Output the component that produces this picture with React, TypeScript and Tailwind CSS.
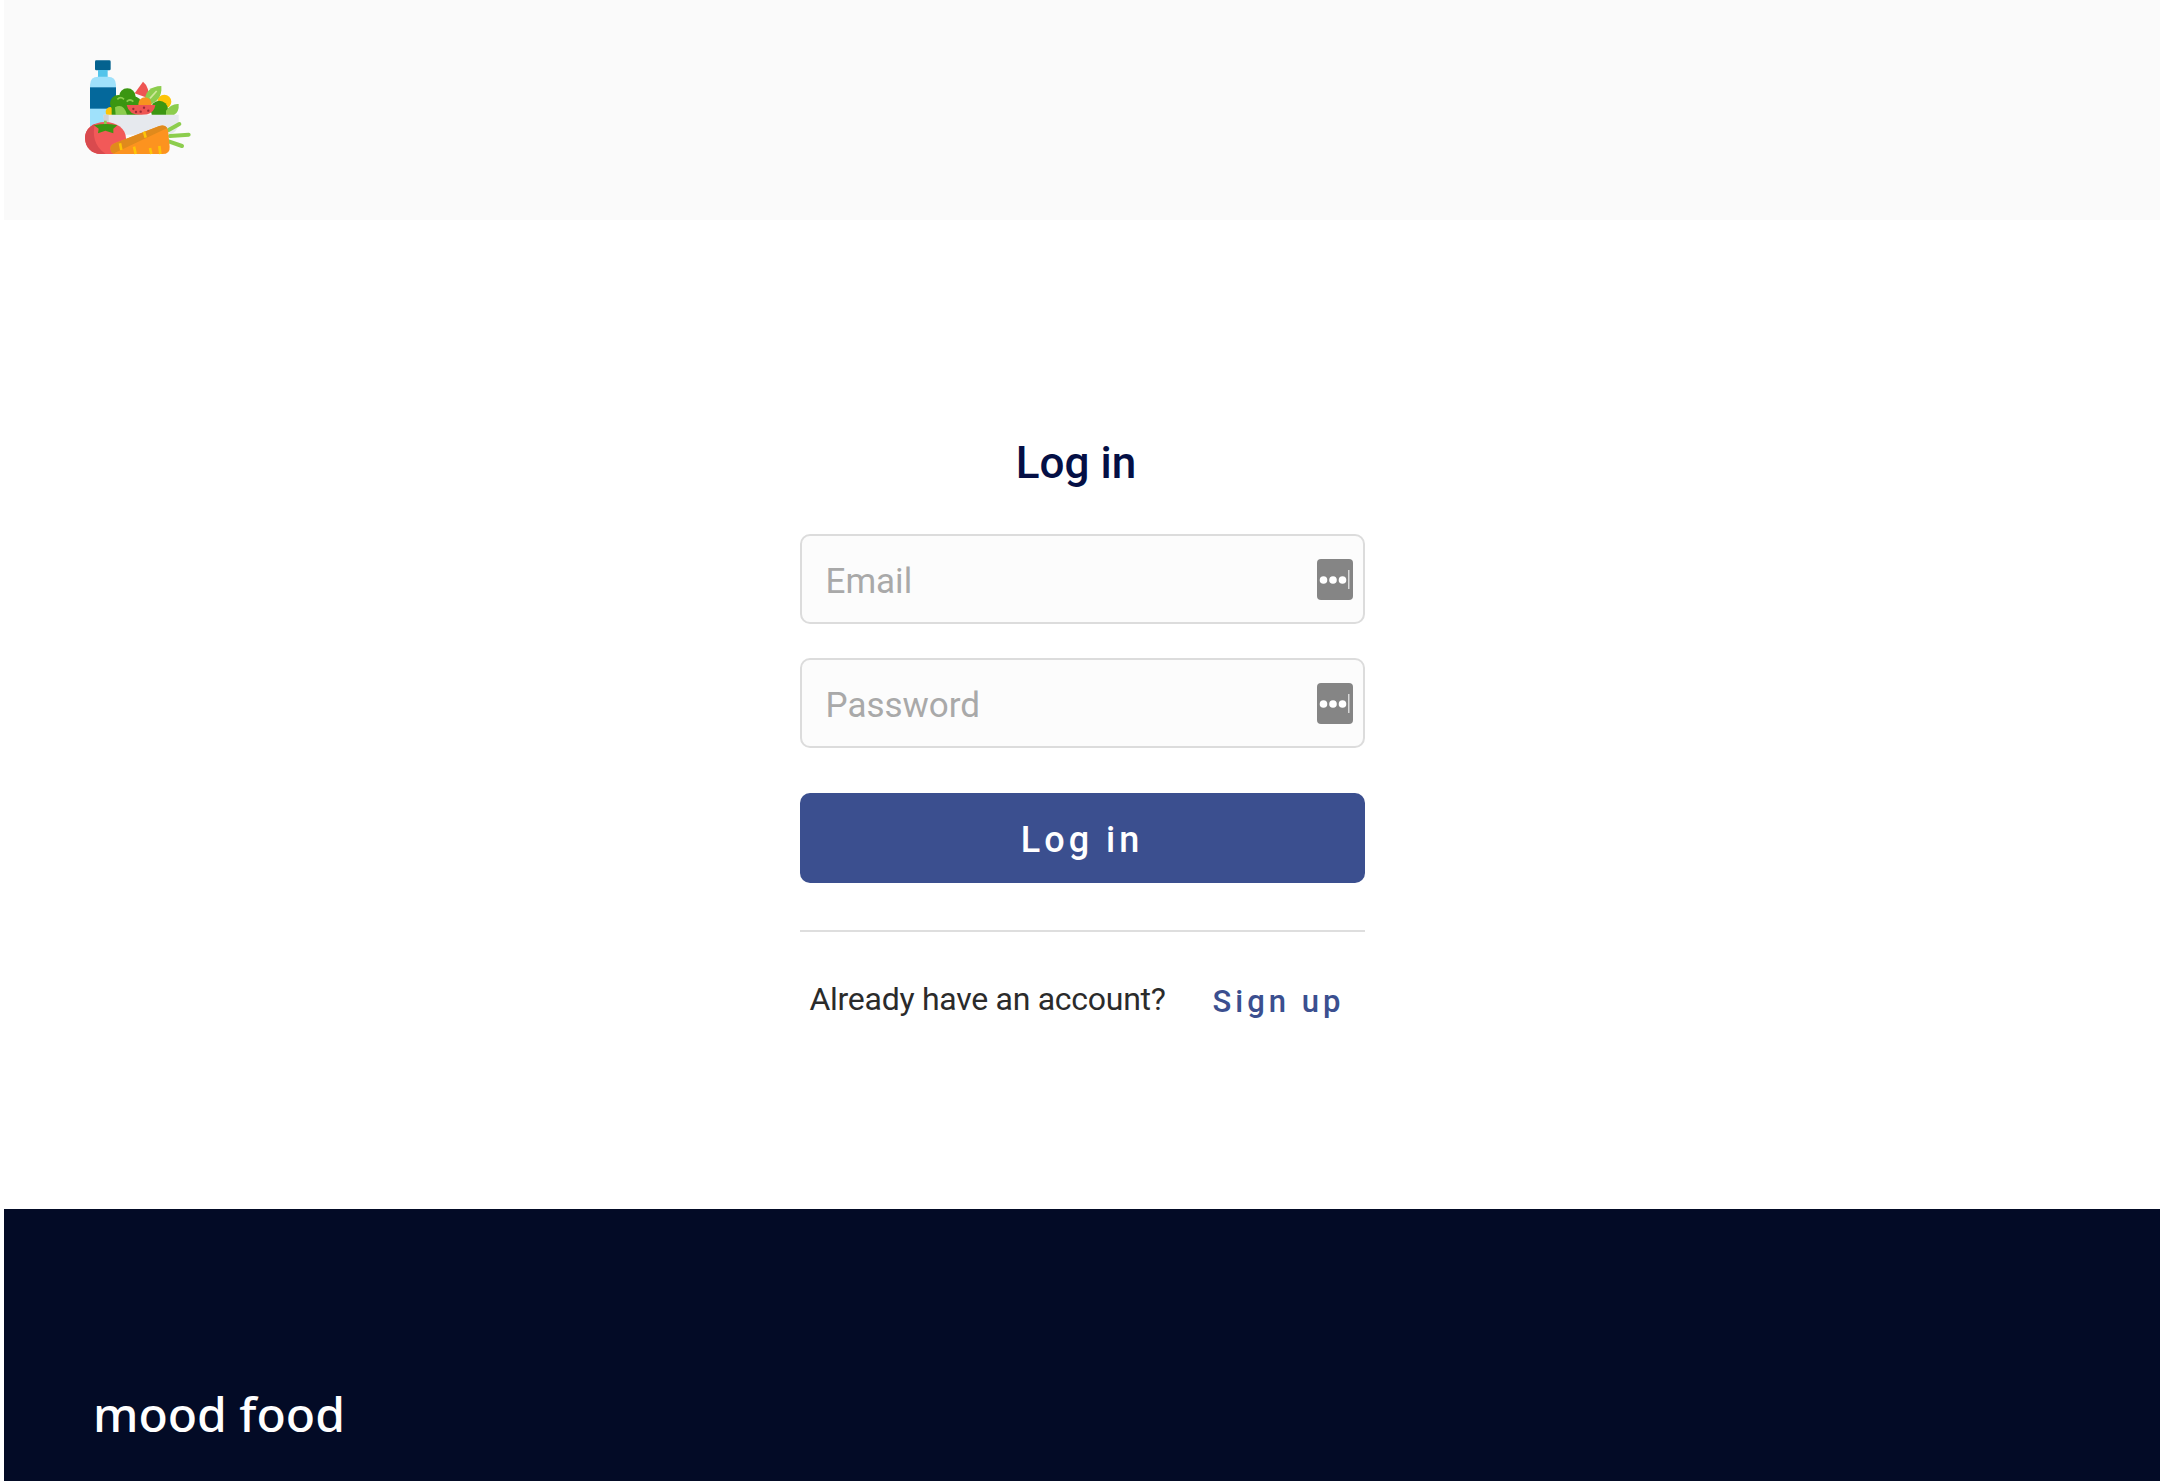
function Logo() {
  return (
    <svg viewBox="0 0 390 330" className="block h-[110px] w-[130px] blur-[0.7px]">
      {/* bottle */}
      <rect x="75" y="31" width="47" height="30" rx="4" fill="#04628f" />
      <rect x="84" y="60" width="29" height="22" fill="#53c4ea" />
      <path d="M60 105q0-25 25-25h28q25 0 25 25v130H60z" fill="#9fe1fb" />
      <rect x="60" y="112" width="78" height="64" fill="#04689b" />
      {/* salad */}
      <circle cx="122" cy="186" r="15" fill="#fdc407" />
      <path d="M194 130l25-35q20 16 16 50z" fill="#ee5553" />
      <circle cx="283" cy="155" r="21" fill="#fdc407" />
      <path d="M224 152q2-42 50-44 4 46-42 58z" fill="#8ccd4d" />
      <path d="M240 145l20-22" stroke="#cfe89a" strokeWidth="5" fill="none" />
      <g fill="#3b9611">
        <circle cx="145" cy="160" r="25" />
        <circle cx="172" cy="140" r="25" />
        <circle cx="190" cy="165" r="26" />
        <rect x="125" y="165" width="90" height="30" />
        <circle cx="268" cy="178" r="26" />
        <rect x="245" y="178" width="58" height="17" />
      </g>
      <path d="M142 148q10-10 20 0M170 155q10-10 20 0" stroke="#8ccd4d" strokeWidth="5" fill="none" />
      <path d="M135 172q26-14 36 22h-34z" fill="#8ccd4d" />
      <path d="M288 182q16-22 38-20 2 24-14 33h-24z" fill="#8ccd4d" />
      <circle cx="225" cy="162" r="20" fill="#f7931f" />
      <path d="M170 165h86q-4 30-42 30-38 0-44-30z" fill="#ee5553" />
      <g fill="#9a2b35">
        <circle cx="190" cy="177" r="3.5" />
        <circle cx="212" cy="185" r="3.5" />
        <circle cx="235" cy="182" r="3.5" />
        <circle cx="222" cy="173" r="3.5" />
        <circle cx="198" cy="186" r="3.5" />
      </g>
      {/* bowl */}
      <path d="M100 194h226v20q0 40-40 40H130q-24 0-26-30z" fill="#e6e9ee" />
      <path d="M100 194h16v60h-12z" fill="#cfd2d6" />
      {/* tomato */}
      <path d="M105 216c35 0 63 20 63 50v46H92c-26 0-47-20-47-48 0-28 25-48 60-48z" fill="#f25958" />
      <path d="M45 264c0-20 12-35 30-42-8 30-4 65 32 90H92c-26 0-47-20-47-48z" fill="#d94a4e" />
      <rect x="102" y="212" width="8" height="18" fill="#8ccd4d" />
      <path d="M72 226q34-8 70 0l-12 10 0 14-24-8-22 8 2-14z" fill="#3b9611" />
      {/* carrot */}
      <path d="M296 240l32-18M300 258l56-4M296 274l40 14" stroke="#8ccd4d" strokeWidth="12" strokeLinecap="round" fill="none" />
      <path d="M122 300q-4-14 12-20l134-52q20-6 26 12l5 50q2 22-22 22H136q-12 0-14-12z" fill="#fc931f" />
      <path d="M122 300q-4-14 12-20l134-52q16-4 24 6l-160 76q-8 0-10-10z" fill="#e08a1c" />
      <path d="M222 245l5 18M150 280l4 20M192 290l5 22M240 294l4 18M268 288l3 24" stroke="#fdc407" strokeWidth="8" fill="none" />
    </svg>
  );
}

function KeyIcon() {
  return (
    <span className="pointer-events-none absolute top-[25px] right-[12px] h-[41px] w-[36px] rounded-[4px] bg-[#858585]">
      <svg viewBox="0 0 36 41" className="block h-[41px] w-[36px]">
        <circle cx="6.5" cy="21" r="3.8" fill="#fff" />
        <circle cx="16" cy="21" r="3.8" fill="#fff" />
        <circle cx="25.5" cy="21" r="3.8" fill="#fff" />
        <rect x="31" y="11" width="1.5" height="19" fill="#d8d8d8" />
      </svg>
    </span>
  );
}

function Field({ placeholder, type }: { placeholder: string; type: string }) {
  return (
    <div className="relative">
      <input
        type={type}
        placeholder={placeholder}
        className="block h-[90px] w-full rounded-[10px] border-2 border-[#dcdcdc] bg-[#fcfcfc] px-[24px] pt-[4px] text-[35px] outline-none placeholder:text-[#a9a9a9]"
      />
      <KeyIcon />
    </div>
  );
}

export default function App() {
  return (
    <div className="flex min-h-[1481px] flex-col bg-white pl-[4px] font-['Roboto',sans-serif]">
      <header className="h-[220px] bg-[#fafafa] pt-[50px] pl-[66px]">
        <Logo />
      </header>

      <main className="flex h-[989px] flex-col items-center pt-[216px]">
        <div className="w-[565px]">
          <h1 className="pr-[12px] text-center text-[44px] leading-[54px] font-medium text-[#040f45]">Log in</h1>

          <form className="mt-[44px]">
            <div className="flex flex-col gap-[34px]">
              <Field type="text" placeholder="Email" />
              <Field type="password" placeholder="Password" />
            </div>
            <button
              type="button"
              className="mt-[45px] block h-[90px] w-full rounded-[10px] bg-[#3b4f8f] pt-[3px] text-[36px] font-medium tracking-[4px] text-white"
            >
              Log in
            </button>
          </form>

          <div className="mt-[47px] border-t-2 border-[#dedede]" />

          <div className="mt-[47px] flex items-center">
            <span className="ml-[10px] pb-[3px] text-[32px] leading-[40px] font-normal tracking-[-0.28px] text-[#2b2b2b]">Already have an account?</span>
            <a className="ml-[47px] pt-[2px] text-[31px] leading-[40px] font-medium tracking-[4px] text-[#3b4f8f]">Sign up</a>
          </div>
        </div>
      </main>

      <footer className="flex h-[272px] items-end bg-[#030b26] pb-[37px] pl-[89px]">
        <span className="font-['Noto_Sans',sans-serif] text-[48px] leading-[60px] font-medium text-white">mood food</span>
      </footer>
    </div>
  );
}
